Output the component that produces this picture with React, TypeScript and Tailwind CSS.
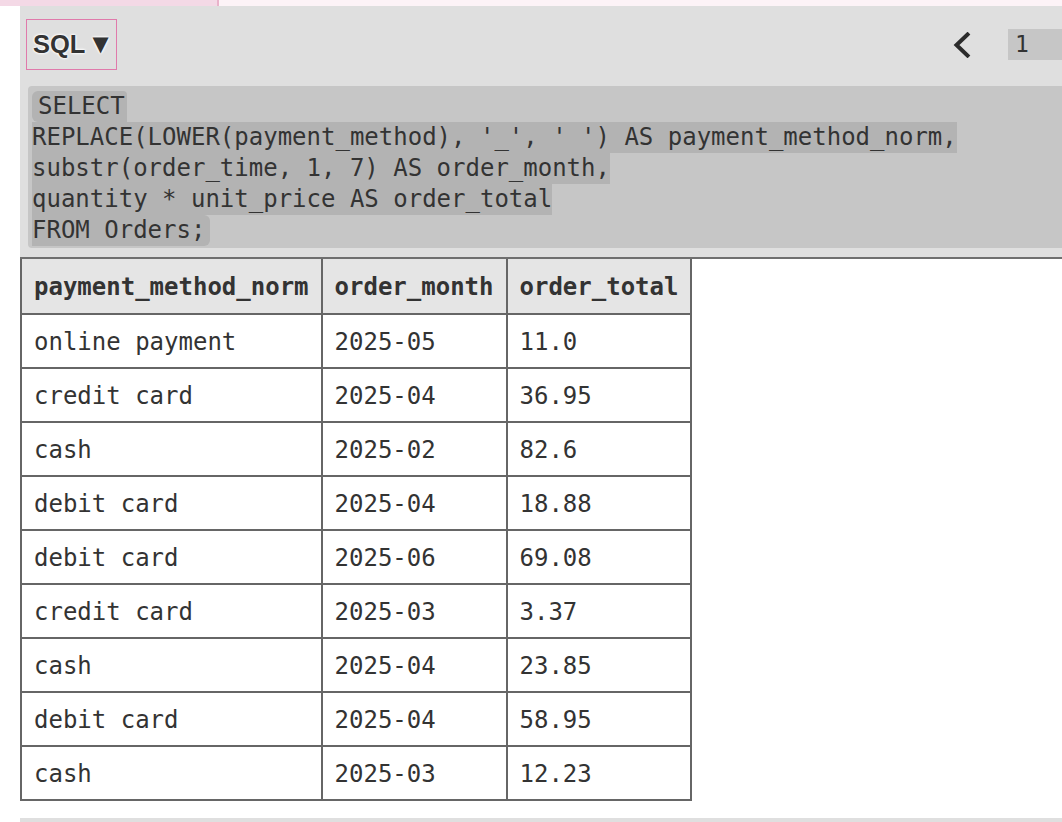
import React from "react";

const mono = "font-['DejaVu_Sans_Mono','Liberation_Mono',monospace]";

const codeLines = [
  "SELECT",
  "REPLACE(LOWER(payment_method), '_', ' ') AS payment_method_norm,",
  "substr(order_time, 1, 7) AS order_month,",
  "quantity * unit_price AS order_total",
  "FROM Orders;",
];

const rows: [string, string, string][] = [
  ["online payment", "2025-05", "11.0"],
  ["credit card", "2025-04", "36.95"],
  ["cash", "2025-02", "82.6"],
  ["debit card", "2025-04", "18.88"],
  ["debit card", "2025-06", "69.08"],
  ["credit card", "2025-03", "3.37"],
  ["cash", "2025-04", "23.85"],
  ["debit card", "2025-04", "58.95"],
  ["cash", "2025-03", "12.23"],
];

export default function App() {
  return (
    <div className="w-[1062px] h-[822px] overflow-hidden bg-white relative">
      {/* top strip */}
      <div className="flex h-[6px]">
        <div className="w-[217px] bg-[#f4d9e6]" />
        <div className="w-[2px] bg-[#e9b3cb]" />
        <div className="flex-1 bg-[#fdf3f7]" />
      </div>

      <div className="ml-[20px] w-[1100px]">
        {/* panel */}
        <div className="bg-[#dfdfdf] pl-[6px] pt-[13px] pb-[9px] border-b-2 border-[#6f6f6f]">
          <div className="flex items-center h-[51px] w-[1062px]">
            <div className="h-[51px] w-[91px] border-[1.5px] border-[#e07aab] flex items-center pl-[6px] font-['Liberation_Sans',Arial,sans-serif] font-bold text-[25.5px] text-[#333] [text-shadow:0_0_3px_#fff,0_0_3px_#fff,0_0_2px_#fff]">
              SQL<span className="ml-[7px] text-[21px] font-['DejaVu_Sans',sans-serif]">▼</span>
            </div>
            <div className="flex-1" />
            <svg width="18" height="26" viewBox="0 0 18 26" className="mr-[37px] mt-[1px]">
              <polyline points="14.5,2.5 3.5,13 14.5,23.5" fill="none" stroke="#2b2b2b" strokeWidth="4" strokeLinecap="square" strokeLinejoin="miter" />
            </svg>
            <div className={`h-[31px] w-[80px] bg-[#c6c6c6] pl-[7px] flex items-center text-[23px] text-[#333] ${mono}`}>1</div>
          </div>

          <div className={`mt-[16px] ml-[2px] bg-[#c6c6c6] rounded-l-[4px] pt-[5px] pb-[2px] pl-[4px] h-[162px] text-[24px] leading-[31px] text-[#333] ${mono}`}>
            {codeLines.map((l, i) => (
              <div key={i} className="h-[31px]">
                <span
                  className={`inline-block h-[31px] whitespace-pre bg-[#b3b3b3] ${
                    i === 0 ? "pl-[6px] pr-[2px] rounded-l-[6px] rounded-tr-[4px]" : ""
                  } ${i === codeLines.length - 1 ? "pr-[5px] rounded-r-[6px]" : ""}`}
                >
                  {l}
                </span>
              </div>
            ))}
          </div>
        </div>

        {/* table */}
        <table className={`border-collapse text-[24px] text-[#333] ${mono}`}>
          <thead>
            <tr className="bg-[#e5e5e5]">
              {["payment_method_norm", "order_month", "order_total"].map((h) => (
                <th key={h} className="border-2 border-t-0 border-[#666] px-[12px] pt-[14px] pb-[12px] leading-[28px] text-left font-bold">
                  {h}
                </th>
              ))}
            </tr>
          </thead>
          <tbody>
            {rows.map((r, i) => (
              <tr key={i} className="bg-white">
                {r.map((c, j) => (
                  <td key={j} className="border-2 border-[#666] px-[12px] pt-[13px] pb-[11px] leading-[28px] whitespace-pre">
                    {c}
                  </td>
                ))}
              </tr>
            ))}
          </tbody>
        </table>

        <div className="mt-[17px] h-[10px] bg-[#dfdfdf]" />
      </div>
    </div>
  );
}
